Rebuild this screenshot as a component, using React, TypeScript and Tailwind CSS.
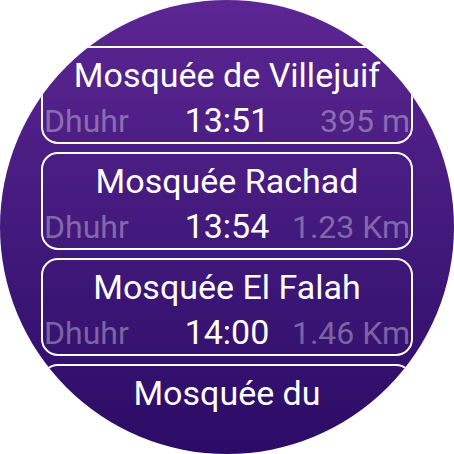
import React from "react";

type Item = { name: string; prayer?: string; time?: string; dist?: string };

const items: Item[] = [
  { name: "Mosquée de Villejuif", prayer: "Dhuhr", time: "13:51", dist: "395 m" },
  { name: "Mosquée Rachad", prayer: "Dhuhr", time: "13:54", dist: "1.23 Km" },
  { name: "Mosquée El Falah", prayer: "Dhuhr", time: "14:00", dist: "1.46 Km" },
  { name: "Mosquée du" },
];

export default function App() {
  return (
    <div className="w-[454px] h-[454px] bg-white" style={{ fontFamily: "Roboto, 'Noto Sans', sans-serif" }}>
      <div className="w-[454px] h-[454px] rounded-full overflow-hidden bg-gradient-to-b from-[#5c2693] to-[#2b0b66]">
        <div className="flex flex-col gap-[8px] pt-[46px] px-[41px]">
          {items.map((it, i) => (
            <div
              key={i}
              className="h-[98px] shrink-0 border-2 border-white rounded-[17px] pt-[8px] px-[1px] flex flex-col gap-[7px]"
            >
              <div className="text-white text-[34px] leading-[38px] text-center whitespace-nowrap">{it.name}</div>
              {it.time && (
                <div className="grid grid-cols-3 items-baseline leading-[38px] whitespace-nowrap">
                  <div className="text-left text-white/35 text-[32px]">{it.prayer}</div>
                  <div className="text-center text-white text-[34px]">{it.time}</div>
                  <div className="text-right text-white/35 text-[32px]">{it.dist}</div>
                </div>
              )}
            </div>
          ))}
        </div>
      </div>
    </div>
  );
}
